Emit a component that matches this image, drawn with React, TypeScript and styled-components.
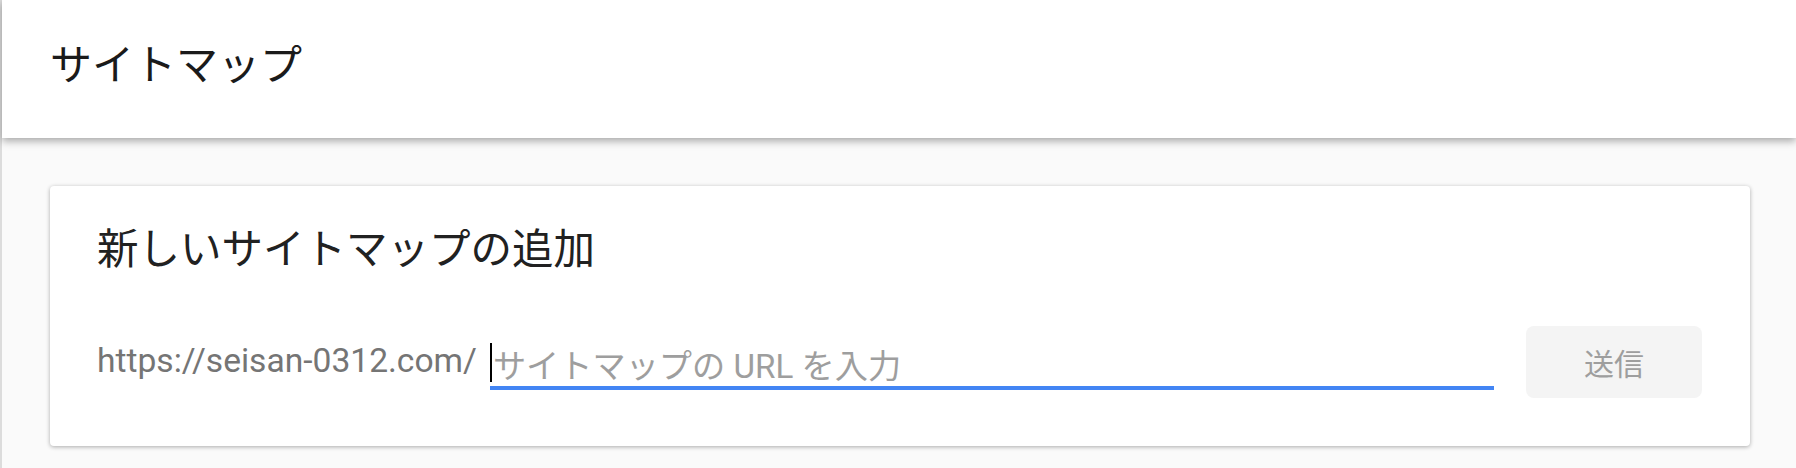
import styled, { createGlobalStyle } from "styled-components";

const GlobalStyle = createGlobalStyle`
  * {
    box-sizing: border-box;
  }
  body {
    margin: 0;
    background-color: #fafafa;
    font-family: Roboto, "Noto Sans CJK JP", sans-serif;
  }
`;

const Page = styled.div`
  min-height: 100vh;
  border-left: 2px solid #dcdcdc;
  background-color: #fafafa;
`;

const Header = styled.header`
  position: relative;
  z-index: 1;
  height: 138px;
  padding: 37px 0 0 48px;
  background-color: #fff;
  box-shadow: 0 3px 8px rgba(0, 0, 0, 0.34);
`;

const PageTitle = styled.h1`
  margin: 0;
  font-family: "Noto Sans CJK JP", sans-serif;
  font-size: 42px;
  font-weight: 400;
  line-height: 50px;
  color: #1a1a1a;
`;

const Main = styled.main`
  padding: 48px 46px 0 48px;
`;

const Card = styled.section`
  padding: 35px 48px 48px 47px;
  background-color: #fff;
  border-radius: 4px;
  box-shadow: 0 1px 4px rgba(0, 0, 0, 0.32);
`;

const CardTitle = styled.h2`
  margin: 0;
  font-family: "Noto Sans CJK JP", sans-serif;
  font-size: 41.5px;
  font-weight: 400;
  line-height: 50px;
  color: #212121;
`;

const FormRow = styled.form`
  display: flex;
  align-items: flex-start;
  height: 72px;
  margin-top: 55px;
`;

const Prefix = styled.span`
  margin-top: 15px;
  margin-right: 13px;
  font-size: 33.6px;
  line-height: 40px;
  color: #757575;
  white-space: nowrap;
`;

const Field = styled.div`
  position: relative;
  flex: 1;
  margin-top: 21px;
  border-bottom: 4px solid #4285f4;
`;

const Caret = styled.span`
  position: absolute;
  left: 0;
  top: -4px;
  width: 2px;
  height: 39px;
  background-color: #000;
`;

const UrlInput = styled.input`
  all: unset;
  display: block;
  width: 100%;
  height: 39px;
  padding-left: 3px;
  font-family: Roboto, "Noto Sans CJK JP", sans-serif;
  font-size: 33.2px;
  line-height: 39px;
  color: #212121;

  &::placeholder {
    color: #9e9e9e;
  }
`;

const SubmitButton = styled.button`
  all: unset;
  display: flex;
  justify-content: center;
  align-items: center;
  width: 176px;
  height: 72px;
  margin-left: 32px;
  border-radius: 8px;
  background-color: #f4f4f4;
  font-family: "Noto Sans CJK JP", sans-serif;
  font-size: 30px;
  color: #9e9e9e;
`;

const App = () => {
  return (
    <>
      <GlobalStyle />
      <Page>
        <Header>
          <PageTitle>サイトマップ</PageTitle>
        </Header>
        <Main>
          <Card>
            <CardTitle>新しいサイトマップの追加</CardTitle>
            <FormRow onSubmit={(e) => e.preventDefault()}>
              <Prefix>https://seisan-0312.com/</Prefix>
              <Field>
                <Caret />
                <UrlInput placeholder="サイトマップの URL を入力" />
              </Field>
              <SubmitButton type="submit">送信</SubmitButton>
            </FormRow>
          </Card>
        </Main>
      </Page>
    </>
  );
};

export default App;
